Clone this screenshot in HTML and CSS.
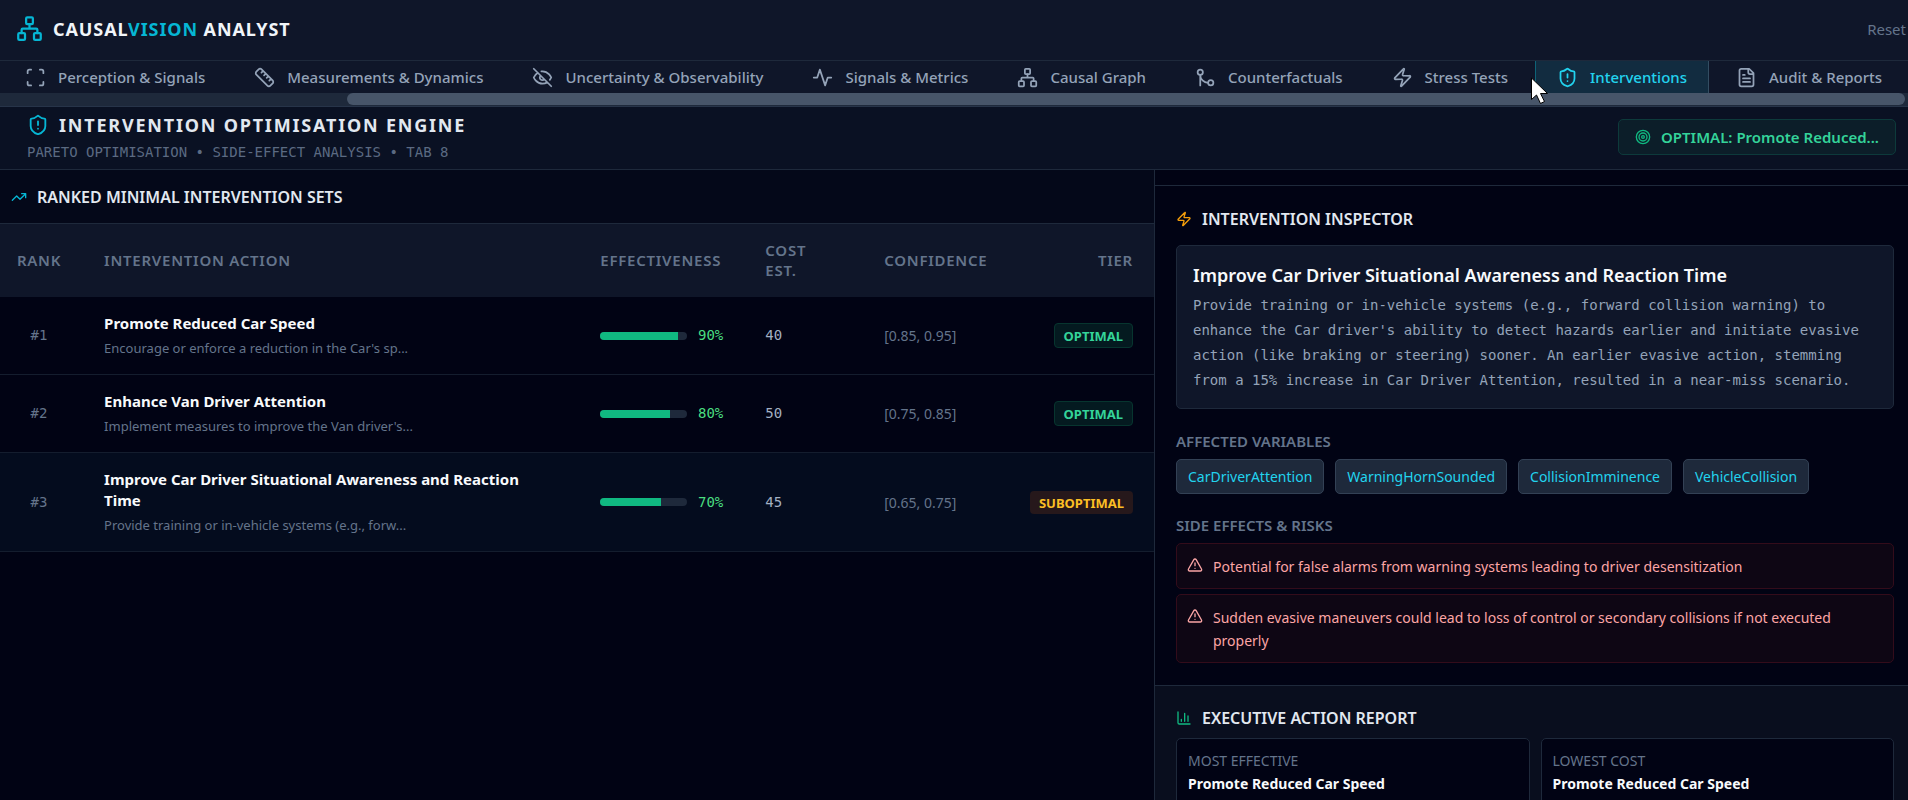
FILE: index.html
```html
<!DOCTYPE html>
<html lang="en">
<head>
<meta charset="utf-8">
<title>CausalVision Analyst</title>
<link rel="stylesheet" href="styles.css">
</head>
<body>
<svg class="defs" aria-hidden="true">
  <symbol id="network" viewBox="0 0 24 24"><rect x="16" y="16" width="6" height="6" rx="1"/><rect x="2" y="16" width="6" height="6" rx="1"/><rect x="9" y="2" width="6" height="6" rx="1"/><path d="M5 16v-3a1 1 0 0 1 1-1h12a1 1 0 0 1 1 1v3M12 12V8"/></symbol>
  <symbol id="scan" viewBox="0 0 24 24"><path d="M3 7V5a2 2 0 0 1 2-2h2M17 3h2a2 2 0 0 1 2 2v2M21 17v2a2 2 0 0 1-2 2h-2M7 21H5a2 2 0 0 1-2-2v-2"/></symbol>
  <symbol id="ruler" viewBox="0 0 24 24"><path d="M2.7 8.7l12.6 12.6a2.4 2.4 0 0 0 3.4 0l2.6-2.6a2.4 2.4 0 0 0 0-3.4L8.7 2.7a2.4 2.4 0 0 0-3.4 0L2.7 5.3a2.4 2.4 0 0 0 0 3.4ZM14.5 12.5l2-2M11.5 9.5l2-2M8.5 6.5l2-2M17.5 15.5l2-2"/></symbol>
  <symbol id="eye-off" viewBox="0 0 24 24"><path d="M9.88 9.88a3 3 0 1 0 4.24 4.24M10.73 5.08A10.43 10.43 0 0 1 12 5c7 0 10 7 10 7a13.16 13.16 0 0 1-1.67 2.68M6.61 6.61A13.526 13.526 0 0 0 2 12s3 7 10 7a9.74 9.74 0 0 0 5.39-1.61M2 2l20 20"/></symbol>
  <symbol id="activity" viewBox="0 0 24 24"><path d="M22 12h-4l-3 9L9 3l-3 9H2"/></symbol>
  <symbol id="merge" viewBox="0 0 24 24"><circle cx="18" cy="18" r="3"/><circle cx="6" cy="6" r="3"/><path d="M6 21V9a9 9 0 0 0 9 9"/></symbol>
  <symbol id="zap" viewBox="0 0 24 24"><path d="M4 14a1 1 0 0 1-.78-1.63l9.9-10.2a.5.5 0 0 1 .86.46l-1.92 6.02A1 1 0 0 0 13 10h7a1 1 0 0 1 .78 1.63l-9.9 10.2a.5.5 0 0 1-.86-.46l1.92-6.02A1 1 0 0 0 11 14z"/></symbol>
  <symbol id="shield" viewBox="0 0 24 24"><path d="M20 13c0 5-3.500 7.500-7.660 8.950a1 1 0 0 1-.67-.01C7.500 20.500 4 18 4 13V6a1 1 0 0 1 1-1c2 0 4.500-1.200 6.240-2.720a1.170 1.170 0 0 1 1.520 0C14.510 3.810 17 5 19 5a1 1 0 0 1 1 1zM12 8v4M12 16h.01"/></symbol>
  <symbol id="file" viewBox="0 0 24 24"><path d="M15 2H6a2 2 0 0 0-2 2v16a2 2 0 0 0 2 2h12a2 2 0 0 0 2-2V7ZM14 2v4a2 2 0 0 0 2 2h4M10 9H8M16 13H8M16 17H8"/></symbol>
  <symbol id="target" viewBox="0 0 24 24"><circle cx="12" cy="12" r="10"/><circle cx="12" cy="12" r="6"/><circle cx="12" cy="12" r="2"/></symbol>
  <symbol id="trend" viewBox="0 0 24 24"><path d="M22 7l-8.500 8.500-5-5L2 17M16 7h6v6"/></symbol>
  <symbol id="alert" viewBox="0 0 24 24"><path d="M21.730 18l-8-14a2 2 0 0 0-3.480 0l-8 14A2 2 0 0 0 4 21h16a2 2 0 0 0 1.730-3M12 9v4M12 17h.01"/></symbol>
  <symbol id="chart" viewBox="0 0 24 24"><path d="M3 3v16a2 2 0 0 0 2 2h16M18 17V9M13 17V5M8 17v-3"/></symbol>
</svg>

<div class="app">
  <header class="topbar">
    <div class="brand">
      <svg class="icon icon-logo"><use href="#network"/></svg>
      <span class="brand-name">CAUSAL<span class="brand-accent">VISION</span> ANALYST</span>
    </div>
    <button class="reset" type="button">Reset</button>
  </header>

  <nav class="tabs">
    <div class="tab-list">
      <button class="tab" type="button"><svg class="icon icon-tab"><use href="#scan"/></svg>Perception &amp; Signals</button>
      <button class="tab" type="button"><svg class="icon icon-tab"><use href="#ruler"/></svg>Measurements &amp; Dynamics</button>
      <button class="tab" type="button"><svg class="icon icon-tab"><use href="#eye-off"/></svg>Uncertainty &amp; Observability</button>
      <button class="tab" type="button"><svg class="icon icon-tab"><use href="#activity"/></svg>Signals &amp; Metrics</button>
      <button class="tab" type="button"><svg class="icon icon-tab"><use href="#network"/></svg>Causal Graph</button>
      <button class="tab" type="button"><svg class="icon icon-tab"><use href="#merge"/></svg>Counterfactuals</button>
      <button class="tab" type="button"><svg class="icon icon-tab"><use href="#zap"/></svg>Stress Tests</button>
      <button class="tab tab-active" type="button"><svg class="icon icon-tab"><use href="#shield"/></svg>Interventions
        <svg class="pointer" viewBox="0 0 18 28"><path d="M1 1v21.500l5-4.500 4 8.500 4-2-4-8h7z"/></svg>
      </button>
      <button class="tab" type="button"><svg class="icon icon-tab"><use href="#file"/></svg>Audit &amp; Reports</button>
    </div>
    <div class="scroll-track"><div class="scroll-thumb"></div></div>
  </nav>

  <section class="page-head">
    <div>
      <h1 class="page-title"><svg class="icon icon-title"><use href="#shield"/></svg>INTERVENTION OPTIMISATION ENGINE</h1>
      <p class="page-sub">PARETO OPTIMISATION • SIDE-EFFECT ANALYSIS • TAB 8</p>
    </div>
    <div class="best"><svg class="icon icon-sm best-icon"><use href="#target"/></svg>OPTIMAL: Promote Reduced...</div>
  </section>

  <main class="columns">
    <section class="ranking">
      <h2 class="section-title ranking-title"><svg class="icon icon-sm cyan"><use href="#trend"/></svg>RANKED MINIMAL INTERVENTION SETS</h2>
      <table class="sets">
        <thead>
          <tr>
            <th class="col-rank">RANK</th>
            <th class="col-action">INTERVENTION ACTION</th>
            <th class="col-effect">EFFECTIVENESS</th>
            <th class="col-cost">COST EST.</th>
            <th class="col-conf">CONFIDENCE</th>
            <th class="col-tier">TIER</th>
          </tr>
        </thead>
        <tbody>
          <tr>
            <td class="col-rank">#1</td>
            <td class="col-action"><div class="action">Promote Reduced Car Speed</div><div class="summary">Encourage or enforce a reduction in the Car's sp...</div></td>
            <td><div class="effect"><div class="bar"><div class="fill" style="width:90%"></div></div>90%</div></td>
            <td class="cost">40</td>
            <td class="conf">[0.85, 0.95]</td>
            <td class="col-tier"><span class="tier optimal">OPTIMAL</span></td>
          </tr>
          <tr>
            <td class="col-rank">#2</td>
            <td class="col-action"><div class="action">Enhance Van Driver Attention</div><div class="summary">Implement measures to improve the Van driver's...</div></td>
            <td><div class="effect"><div class="bar"><div class="fill" style="width:80%"></div></div>80%</div></td>
            <td class="cost">50</td>
            <td class="conf">[0.75, 0.85]</td>
            <td class="col-tier"><span class="tier optimal">OPTIMAL</span></td>
          </tr>
          <tr class="selected">
            <td class="col-rank">#3</td>
            <td class="col-action"><div class="action">Improve Car Driver Situational Awareness and Reaction Time</div><div class="summary">Provide training or in-vehicle systems (e.g., forw...</div></td>
            <td><div class="effect"><div class="bar"><div class="fill" style="width:70%"></div></div>70%</div></td>
            <td class="cost">45</td>
            <td class="conf">[0.65, 0.75]</td>
            <td class="col-tier"><span class="tier suboptimal">SUBOPTIMAL</span></td>
          </tr>
        </tbody>
      </table>
    </section>

    <aside class="side">
      <div class="side-top"></div>
      <section class="inspector">
        <h2 class="section-title"><svg class="icon icon-sm amber"><use href="#zap"/></svg>INTERVENTION INSPECTOR</h2>
        <div class="detail">
          <h3 class="detail-title">Improve Car Driver Situational Awareness and Reaction Time</h3>
          <p class="detail-text">Provide training or in-vehicle systems (e.g., forward collision warning) to enhance the Car driver's ability to detect hazards earlier and initiate evasive action (like braking or steering) sooner. An earlier evasive action, stemming from a 15% increase in Car Driver Attention, resulted in a near-miss scenario.</p>
        </div>
        <h4 class="label">AFFECTED VARIABLES</h4>
        <div class="chips">
          <span class="chip">CarDriverAttention</span>
          <span class="chip">WarningHornSounded</span>
          <span class="chip">CollisionImminence</span>
          <span class="chip">VehicleCollision</span>
        </div>
        <h4 class="label">SIDE EFFECTS &amp; RISKS</h4>
        <ul class="risks">
          <li class="risk"><svg class="icon icon-sm risk-icon"><use href="#alert"/></svg><span>Potential for false alarms from warning systems leading to driver desensitization</span></li>
          <li class="risk"><svg class="icon icon-sm risk-icon"><use href="#alert"/></svg><span>Sudden evasive maneuvers could lead to loss of control or secondary collisions if not executed properly</span></li>
        </ul>
      </section>
      <section class="report">
        <h2 class="section-title"><svg class="icon icon-sm green"><use href="#chart"/></svg>EXECUTIVE ACTION REPORT</h2>
        <div class="cards">
          <div class="card"><div class="card-label">MOST EFFECTIVE</div><div class="card-value">Promote Reduced Car Speed</div></div>
          <div class="card"><div class="card-label">LOWEST COST</div><div class="card-value">Promote Reduced Car Speed</div></div>
        </div>
      </section>
    </aside>
  </main>
</div>
</body>
</html>
```
FILE: styles.css
```css
* { box-sizing: border-box; margin: 0; padding: 0; }
body {
  background: #010314;
  color: #e2e8f0;
  font-family: "Noto Sans", "Open Sans", sans-serif;
  font-size: 14px;
}
button { background: none; border: 0; color: inherit; font: inherit; cursor: pointer; }
.defs { display: none; }
.app { display: flex; flex-direction: column; height: 100vh; overflow: hidden; }

.icon { flex: none; fill: none; stroke: currentColor; stroke-width: 2; stroke-linecap: round; stroke-linejoin: round; }
.icon-logo { width: 27px; height: 27px; color: #06b6d4; }
.icon-tab { width: 21px; height: 21px; }
.icon-title { width: 22px; height: 22px; color: #06b6d4; }
.icon-sm { width: 16px; height: 16px; }
.cyan { color: #06b6d4; }
.amber { color: #f59e0b; }
.green { color: #10b981; }

/* Top bar */
.topbar { display: flex; flex: none; align-items: center; justify-content: space-between; min-height: 61px; padding: 0 2px 3px 16px; background: #0f1629; border-bottom: 1px solid #1e293b; }
.brand { display: flex; align-items: center; gap: 10px; }
.brand-name { color: #f1f5f9; font-size: 18px; font-weight: 700; letter-spacing: 0.05em; }
.brand-accent { color: #06b6d4; }
.reset { color: #64748b; font-size: 15px; line-height: 24px; }

/* Tabs */
.tabs { flex: none; background: #0f1629; border-bottom: 1px solid #273449; }
.tab-list { display: flex; gap: 5px; padding-left: 3px; }
.tab { position: relative; display: flex; flex: none; align-items: center; gap: 12px; height: 32px; padding: 0 21px; border: 1px solid transparent; border-width: 0 1px; color: #94a3b8; font-size: 15px; font-weight: 500; white-space: nowrap; }
.tab-active { background: #122c40; border-left-color: #0e6377; border-right-color: #334d62; color: #22d3ee; }
.scroll-track { height: 13px; padding: 0 3px 1px 0; background: #1e293b; }
.scroll-thumb { height: 12px; margin-left: 18.2%; border-radius: 6px; background: #475569; }
.pointer { position: absolute; left: -6px; top: 16px; z-index: 2; width: 19px; height: 28px; fill: #fff; stroke: #000; stroke-width: 1; }

/* Page heading */
.page-head { display: flex; flex: none; align-items: center; justify-content: space-between; padding: 5px 12px 7px 27px; background: #0a1123; border-bottom: 1px solid #1e293b; }
.page-title { display: flex; align-items: center; gap: 10px; font-size: 18px; line-height: 26px; font-weight: 700; letter-spacing: 0.1em; }
.page-sub { margin-top: 4px; color: #5b6a82; font-family: "DejaVu Sans Mono", monospace; font-size: 14px; line-height: 20px; }
.best { display: flex; align-items: center; gap: 10px; padding: 6px 16px; border: 1px solid #0d3a3b; border-radius: 5px; background: #0c1e29; color: #34d399; font-size: 15px; line-height: 22px; font-weight: 600; }
.best-icon { color: #10b981; }

/* Columns */
.columns { display: grid; flex: 1; grid-template-columns: 1154fr 754fr; min-height: 0; }
.section-title { display: flex; align-items: center; gap: 10px; color: #e2e8f0; font-size: 16px; line-height: 24px; font-weight: 600; }
.ranking-title { padding: 15px 11px 14px; background: #040819; border-bottom: 1px solid #1e293b; }

/* Ranking table */
.sets { width: 100%; border-collapse: collapse; table-layout: fixed; }
.sets th { height: 73px; padding: 0 21px 2px; background: #0f1629; color: #64748b; font-size: 15px; line-height: 20px; font-weight: 600; letter-spacing: 0.05em; text-align: left; }
.sets td { padding: 16px 21px; border-bottom: 1px solid #141d2e; line-height: 21px; }
.sets .col-rank { width: 7.2%; padding-left: 0; padding-right: 5px; text-align: center; }
.sets .col-action { width: 43%; padding-right: 32px; }
.sets .col-effect { width: 14.3%; }
.sets .col-cost { width: 10.3%; }
.sets .col-conf { width: 12%; padding-right: 0; }
.sets .col-tier { padding-left: 0; text-align: right; }
.sets td.col-rank { color: #64748b; font-family: "DejaVu Sans Mono", monospace; }
.selected { background: #040c1e; }
.action { color: #f8fafc; font-size: 15px; font-weight: 700; line-height: 21px; }
.summary { margin-top: 4px; color: #64748b; font-size: 13px; line-height: 20px; white-space: nowrap; }
.effect { display: flex; align-items: center; gap: 11px; color: #4ade80; font-family: "DejaVu Sans Mono", monospace; }
.bar { flex: 1; height: 8px; overflow: hidden; border-radius: 4px; background: #1e293b; }
.fill { height: 100%; background: #10b981; }
.cost { color: #a3b0c3; font-family: "DejaVu Sans Mono", monospace; }
.conf { color: #64748b; white-space: nowrap; }
.tier { display: inline-block; border-radius: 4px; font-size: 13px; font-weight: 700; }
.optimal { padding: 2px 9px 0; border: 1px solid #07352f; background: #041a20; color: #34d399; }
.suboptimal { padding: 2px 9px 0; background: #26181b; color: #fbbf24; }

/* Side panel */
.side { display: flex; flex-direction: column; min-width: 0; overflow: hidden; border-left: 1px solid #1e293b; }
.side-top { flex: none; height: 16px; border-bottom: 1px solid #1e293b; }
.inspector { flex: none; padding: 21px 14px 22px 21px; border-bottom: 1px solid #1e293b; }
.detail { margin: 14px 0 21px; padding: 15px 16px; border: 1px solid #1e293b; border-radius: 5px; background: #0f1629; }
.detail-title { color: #f8fafc; font-size: 18px; line-height: 28px; font-weight: 600; }
.detail-text { margin-top: 4px; color: #94a3b8; font-family: "DejaVu Sans Mono", monospace; font-size: 14px; line-height: 25px; }
.label { margin-bottom: 7px; color: #64748b; font-size: 15px; line-height: 22px; font-weight: 600; }
.chips { display: flex; flex-wrap: wrap; gap: 11px; margin-bottom: 20px; }
.chip { padding: 6px 11px; border: 1px solid #334155; border-radius: 5px; background: #1e293b; color: #22d3ee; line-height: 21px; }
.risks { display: grid; gap: 5px; list-style: none; }
.risk { display: flex; gap: 10px; padding: 11px 10px 10px; border: 1px solid #330c1b; border-radius: 5px; background: #0e0614; color: #fca5a5; line-height: 23px; }
.risk-icon { margin-top: 2px; }
.report { flex: 1; padding: 20px 14px 20px 21px; background: #090e1e; }
.cards { display: grid; grid-template-columns: 1fr 1fr; gap: 11px; margin-top: 8px; }
.card { padding: 11px; border: 1px solid #1e293b; border-radius: 5px; background: #010314; }
.card-label { color: #64748b; line-height: 22px; }
.card-value { color: #f8fafc; font-weight: 700; line-height: 23px; }
```
